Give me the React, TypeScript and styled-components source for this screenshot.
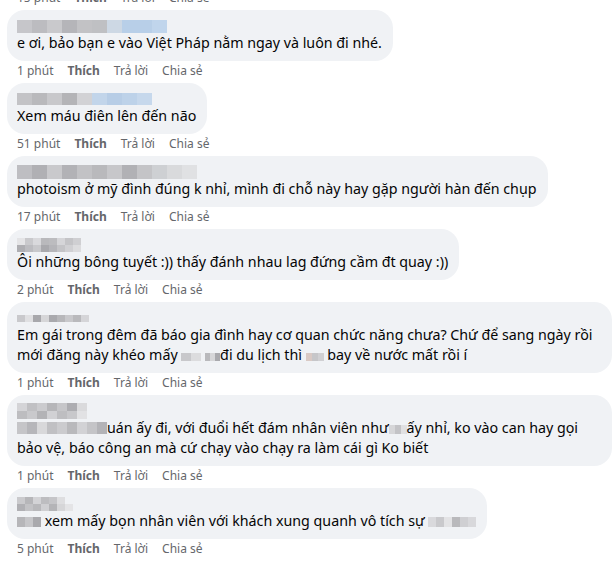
import React from 'react';
import styled, { createGlobalStyle } from 'styled-components';

const GlobalStyle = createGlobalStyle`
    body {
        margin: 0;
        background: #ffffff;
        font-family: "Noto Sans", "Liberation Sans", sans-serif;
        overflow: hidden;
    }
`;

const List = styled.div`
    display: flex;
    flex-direction: column;
    align-items: flex-start;
    padding: 0 1px 0 7px;
    margin-top: -12px;
`;

const Item = styled.div`
    display: flex;
    flex-direction: column;
    align-items: flex-start;
    align-self: stretch;
`;

const Bubble = styled.div<{ $wide?: boolean }>`
    align-self: ${(p) => (p.$wide ? 'stretch' : 'flex-start')};
    background: #f0f2f5;
    border-radius: 18px;
    padding: 9px 11px 8px 10px;
`;

const NameSlot = styled.div`
    height: 14px;
    display: flex;
    flex-direction: column;
    justify-content: center;
`;

const PixelRow = styled.div`
    display: flex;
`;

const Pixel = styled.span<{ $w: number; $h: number; $c: string }>`
    display: block;
    width: ${(p) => p.$w}px;
    height: ${(p) => p.$h}px;
    background: ${(p) => p.$c};
`;

const Text = styled.div`
    font-size: 14.25px;
    line-height: 20px;
    color: #050505;
    white-space: nowrap;
`;

const Smudge = styled.span`
    display: inline-flex;
    flex-direction: column;
    vertical-align: -1px;
`;

const Actions = styled.div`
    display: flex;
    gap: 14px;
    padding: 2px 0 4px 10px;
    font-size: 12px;
    line-height: 16px;
    color: #65676b;
`;

const Action = styled.span<{ $strong?: boolean }>`
    font-weight: ${(p) => (p.$strong ? 700 : 400)};
`;

interface Blur {
    w: number;
    h: number;
    rows: string[][];
}

const Pixels: React.FC<{ blur: Blur }> = ({ blur }) => (
    <>
        {blur.rows.map((row, i) => (
            <PixelRow key={i}>
                {row.map((c, j) => (
                    <Pixel key={j} $w={blur.w} $h={blur.h} $c={c} />
                ))}
            </PixelRow>
        ))}
    </>
);

const Inline: React.FC<{ blur: Blur }> = ({ blur }) => (
    <Smudge>
        <Pixels blur={blur} />
    </Smudge>
);

const names: Blur[] = [
    {
        w: 15,
        h: 13,
        rows: [['#c6c6ca', '#bcbcc0', '#c9c9cc', '#b5b5b9', '#c2c2c5', '#bfc0c3', '#cdd8e4', '#b8cfe8', '#b8cfe8', '#c0d5ec']],
    },
    {
        w: 15,
        h: 12,
        rows: [['#c3c3c6', '#b9b9bc', '#c8c8cb', '#b4b4b7', '#d2d2d5', '#c2d5ea', '#b7cde6', '#bdd2e9', '#c6d8ec']],
    },
    {
        w: 15,
        h: 14,
        rows: [['#bebec2', '#b0b0b4', '#c9c9cc', '#b2b2b6', '#c2c2c5', '#b9b9bc', '#c7c7ca', '#b1b1b5', '#c4c4c7', '#ced0d3', '#d9dadc', '#e0e1e3']],
    },
    {
        w: 8,
        h: 7,
        rows: [
            ['#e4e4e6', '#c9c9cc', '#d9d9dc', '#b9b9bc', '#bcbcbf', '#d5d5d8', '#c4c4c7', '#cfcfd2'],
            ['#aeaeb2', '#bcbcc0', '#c8c8cb', '#a9a9ad', '#b5b5b9', '#c4c4c7', '#d0d0d3', '#dcdcde'],
        ],
    },
    {
        w: 8,
        h: 7,
        rows: [['#c9c9cc', '#e0e0e2', '#a8a8ac', '#d6d6d8', '#a9a9ad', '#b7b7ba', '#c8c8cb', '#b9b9bc', '#d5d5d8']],
    },
    {
        w: 10,
        h: 8,
        rows: [
            ['#d4d4d7', '#c0c0c3', '#cbcbce', '#b6b6b9', '#c6c6c9', '#adadb1', '#dadadc'],
            ['#bdbdc0', '#c9c9cc', '#b3b3b6', '#d1d1d4', '#bebec1', '#c8c8cb', '#e2e2e4'],
        ],
    },
    {
        w: 8,
        h: 7,
        rows: [
            ['#cacacd', '#b6b6b9', '#d3d3d6', '#bdbdc0', '#c5c5c8', '#dedee0'],
            ['#b0b0b4', '#c2c2c5', '#b8b8bb', '#cfcfd2', '#b4b4b7', '#d6d6d8', '#e4e4e6'],
        ],
    },
];

const hide = {
    a: { w: 10, h: 8, rows: [['#c8c8cb', '#dcdcde']] },
    b: { w: 5, h: 8, rows: [['#b9b9bc', '#d6d6d8', '#a9a9ad']] },
    c: { w: 6, h: 8, rows: [['#d9c9c4', '#c6c6c9', '#d0d0d3']] },
    d: { w: 10, h: 12, rows: [['#c5c5c8', '#b6b6ba', '#d8d8da', '#c0c0c3', '#cbcbce', '#b9b9bc', '#d2d2d5', '#c4c4c7', '#b3b3b7']] },
    e: { w: 6, h: 9, rows: [['#d6d6d8', '#c3c3c6', '#e0e0e2']] },
    f: { w: 8, h: 10, rows: [['#b6b6b9', '#c6c6c9', '#a9a9ad']] },
    g: { w: 8, h: 10, rows: [['#d9d9dc', '#c9c9cc', '#e3e3e5', '#b9b9bc', '#cfcfd2', '#d8d8db']] },
};

interface CommentProps {
    name: Blur;
    time: string;
    wide?: boolean;
    children: React.ReactNode;
}

const ActionBar: React.FC<{ time: string }> = ({ time }) => (
    <Actions>
        <Action>{time}</Action>
        <Action $strong>Thích</Action>
        <Action>Trả lời</Action>
        <Action>Chia sẻ</Action>
    </Actions>
);

const Comment: React.FC<CommentProps> = ({ name, time, wide, children }) => (
    <Item>
        <Bubble $wide={wide}>
            <NameSlot>
                <Pixels blur={name} />
            </NameSlot>
            {children}
        </Bubble>
        <ActionBar time={time} />
    </Item>
);

export default function App() {
    return (
        <>
            <GlobalStyle />
            <List>
                <ActionBar time="15 phút" />
                <Comment name={names[0]} time="1 phút">
                    <Text>e ơi, bảo bạn e vào Việt Pháp nằm ngay và luôn đi nhé.</Text>
                </Comment>
                <Comment name={names[1]} time="51 phút">
                    <Text>Xem máu điên lên đến não</Text>
                </Comment>
                <Comment name={names[2]} time="17 phút">
                    <Text>photoism ở mỹ đình đúng k nhỉ, mình đi chỗ này hay gặp người hàn đến chụp</Text>
                </Comment>
                <Comment name={names[3]} time="2 phút">
                    <Text>Ôi những bông tuyết :)) thấy đánh nhau lag đứng cầm đt quay :))</Text>
                </Comment>
                <Comment name={names[4]} time="1 phút" wide>
                    <Text>Em gái trong đêm đã báo gia đình hay cơ quan chức năng chưa? Chứ để sang ngày rồi</Text>
                    <Text>
                        mới đăng này khéo mấy <Inline blur={hide.a} /> <Inline blur={hide.b} />đi du lịch thì{' '}
                        <Inline blur={hide.c} /> bay về nước mất rồi í
                    </Text>
                </Comment>
                <Comment name={names[5]} time="1 phút" wide>
                    <Text>
                        <Inline blur={hide.d} />
                        uán ấy đi, với đuổi hết đám nhân viên như<Inline blur={hide.e} />ấy nhỉ, ko vào can hay gọi
                    </Text>
                    <Text>bảo vệ, báo công an mà cứ chạy vào chạy ra làm cái gì Ko biết</Text>
                </Comment>
                <Comment name={names[6]} time="5 phút">
                    <Text>
                        <Inline blur={hide.f} /> xem mấy bọn nhân viên với khách xung quanh vô tích sự{' '}
                        <Inline blur={hide.g} />
                    </Text>
                </Comment>
            </List>
        </>
    );
}
